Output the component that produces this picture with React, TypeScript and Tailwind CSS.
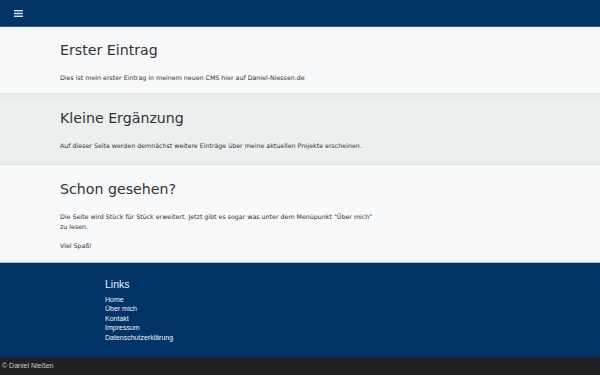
const links = ["Home", "Über mich", "Kontakt", "Impressum", "Datenschutzerklärung"];

export default function App() {
  return (
    <div className="flex min-h-[375px] flex-col bg-[#f8f9fa] font-['DejaVu_Sans',sans-serif] text-[#333]">
      {/* Navbar */}
      <nav className="flex h-[27px] items-center border-b border-[#3d5f82] bg-[#003366] pl-[14px]">
        <svg width="9" height="7" viewBox="0 0 9 7" className="text-[#d8e8f6]">
          <rect x="0" y="0" width="9" height="1.4" fill="currentColor" />
          <rect x="0" y="2.8" width="9" height="1.4" fill="currentColor" />
          <rect x="0" y="5.6" width="9" height="1.4" fill="currentColor" />
        </svg>
      </nav>

      {/* Entries */}
      <section className="h-[66px] bg-[#f8f9fa] px-[60px] pt-[14px] shadow-[inset_0_6px_6px_-4px_rgba(0,0,0,0.05)]">
        <h2 className="text-[14.2px] leading-[18px]">Erster Eintrag</h2>
        <p className="mt-[14px] text-[6.3px]">Dies ist mein erster Eintrag in meinem neuen CMS hier auf Daniel-Niessen.de</p>
      </section>

      <section className="h-[71px] bg-[#eceff0] px-[60px] pt-[16px] shadow-[inset_0_8px_8px_-6px_rgba(0,0,0,0.06)]">
        <h2 className="text-[14.2px] leading-[18px]">Kleine Ergänzung</h2>
        <p className="mt-[14px] text-[6.3px]">Auf dieser Seite werden demnächst weitere Einträge über meine aktuellen Projekte erscheinen.</p>
      </section>

      <section className="h-[98px] border-t border-[#dde1e3] bg-[#f8f9fa] px-[60px] pt-[15px]">
        <h2 className="text-[14.2px] leading-[18px]">Schon gesehen?</h2>
        <p className="mt-[14px] max-w-[320px] text-[6.3px] leading-[10px]">
          Die Seite wird Stück für Stück erweitert. Jetzt gibt es sogar was unter dem Menüpunkt "Über mich" zu lesen.
        </p>
        <p className="mt-[9px] text-[6.3px]">Viel Spaß!</p>
      </section>

      {/* Footer */}
      <footer className="border-t border-[#9fc3e0] bg-[#003366] px-[105px] pt-[14px] pb-[15px] font-['Liberation_Sans',sans-serif] text-[#eef3f8]">
        <h3 className="text-[10.5px] leading-[14px]">Links</h3>
        <ul className="mt-[4px] text-[7px] leading-[9.4px]">
          {links.map((l) => (
            <li key={l}>{l}</li>
          ))}
        </ul>
      </footer>
      <div className="flex h-[18px] items-center bg-[#212121] px-[2px] font-['Liberation_Sans',sans-serif] text-[7px] text-[#c9c9c9]">
        © Daniel Nießen
      </div>
    </div>
  );
}
